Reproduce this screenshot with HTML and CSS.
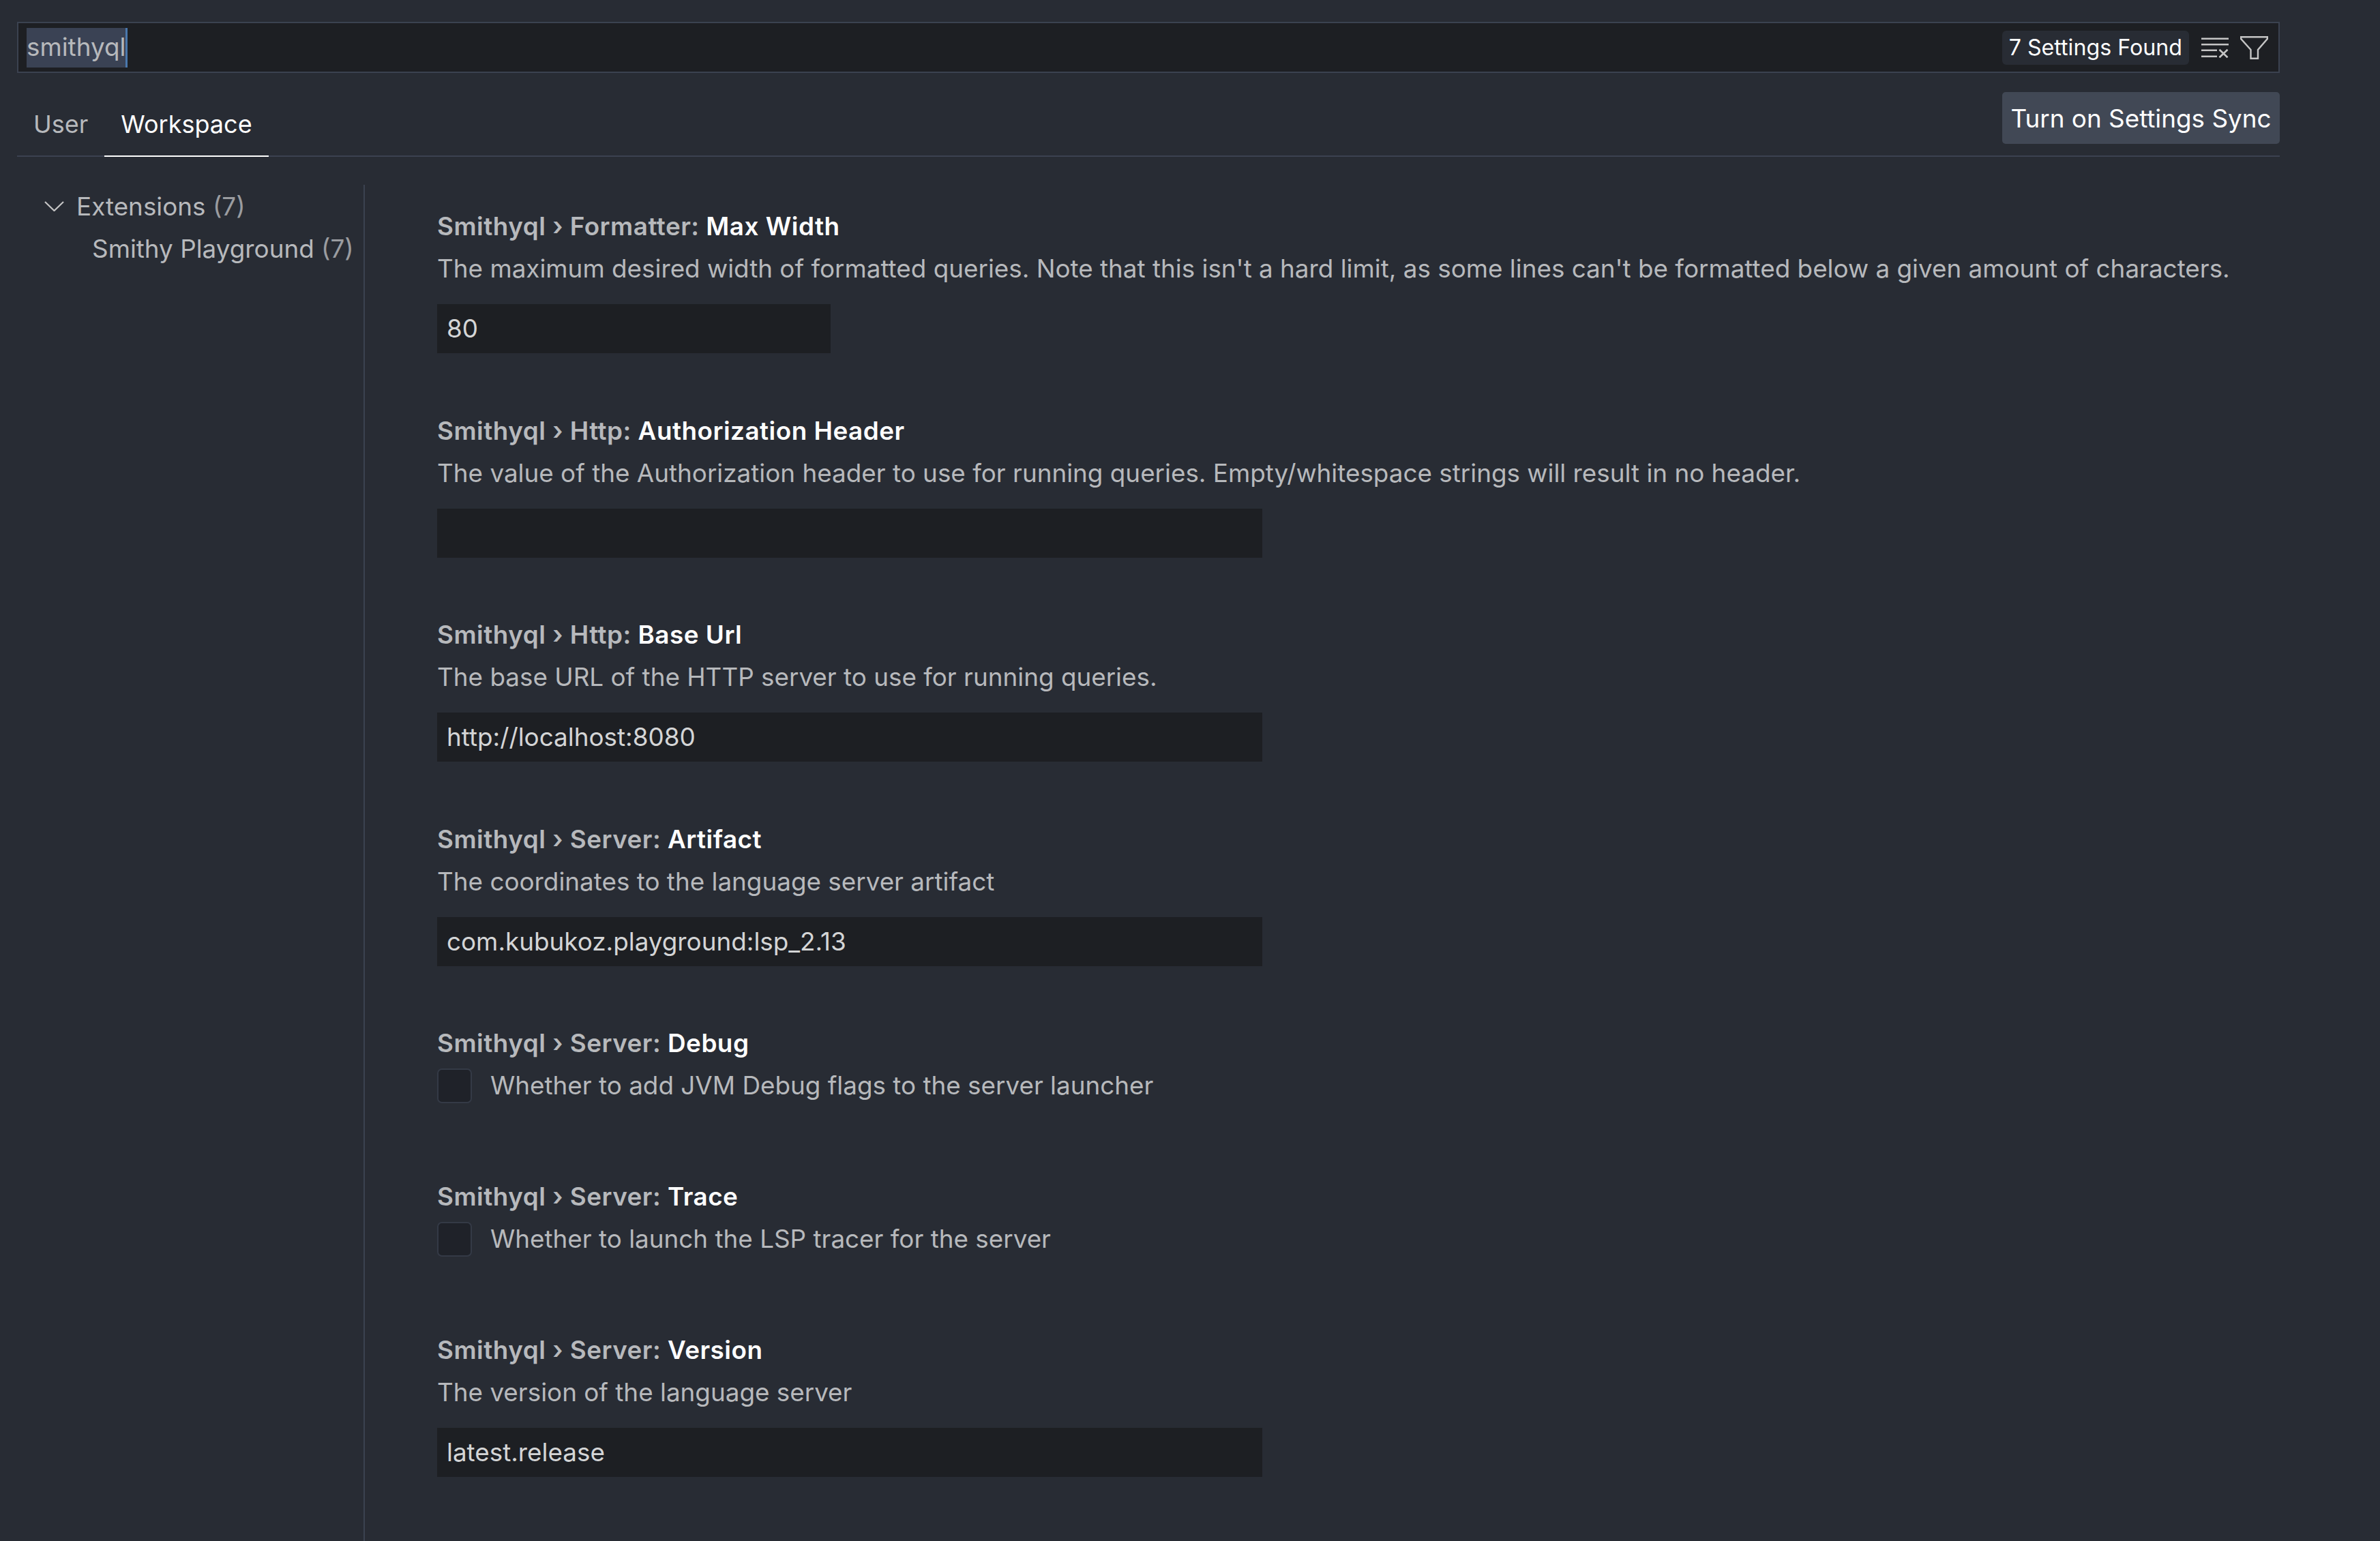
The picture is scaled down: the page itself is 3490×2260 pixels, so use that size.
FILE: index.html
```html
<!DOCTYPE html>
<html lang="en">
<head>
    <meta charset="UTF-8">
    <title>Settings</title>
    <link rel="stylesheet" href="styles.css">
</head>
<body>
    <div class="settings">
        <div class="search-box">
            <div class="search-field"><span class="search-text">smithyql</span></div>
            <span class="search-count">7 Settings Found</span>
            <svg class="search-icon clear-icon" viewBox="0 0 40 30" fill="none" stroke="#c5c5c5" stroke-width="2.6">
                <path d="M0 1.7H40M0 10.3H40M0 18.7H23M0 27.7H23M26.5 17.7L38.5 29.3M38.5 17.7L26.5 29.3"/>
            </svg>
            <svg class="search-icon filter-icon" viewBox="0 0 41 34" fill="none" stroke="#c5c5c5" stroke-width="2.4">
                <path d="M1.2 1.2H39.8V4L26 20V32.8H15.5V20L1.2 4Z"/>
            </svg>
        </div>

        <div class="tabs">
            <div class="tab">User</div>
            <div class="tab active">Workspace</div>
            <button class="sync-button">Turn on Settings Sync</button>
        </div>

        <div class="main">
            <div class="tree">
                <div class="tree-row">
                    <svg class="chevron" viewBox="0 0 29 15" fill="none" stroke="#c5c5c5" stroke-width="2.2">
                        <path d="M1 1L14.5 14L28 1"/>
                    </svg>
                    <span>Extensions <span class="tree-count">(7)</span></span>
                </div>
                <div class="tree-row child">Smithy Playground <span class="tree-count">(7)</span></div>
            </div>

            <div class="list">
                <div class="item">
                    <div class="item-title">Smithyql › Formatter: <b>Max Width</b></div>
                    <div class="item-desc">The maximum desired width of formatted queries. Note that this isn't a hard limit, as some lines can't be formatted below a given amount of characters.</div>
                    <div class="input short">80</div>
                </div>
                <div class="item">
                    <div class="item-title">Smithyql › Http: <b>Authorization Header</b></div>
                    <div class="item-desc">The value of the Authorization header to use for running queries. Empty/whitespace strings will result in no header.</div>
                    <div class="input"></div>
                </div>
                <div class="item">
                    <div class="item-title">Smithyql › Http: <b>Base Url</b></div>
                    <div class="item-desc">The base URL of the HTTP server to use for running queries.</div>
                    <div class="input">http://localhost:8080</div>
                </div>
                <div class="item">
                    <div class="item-title">Smithyql › Server: <b>Artifact</b></div>
                    <div class="item-desc">The coordinates to the language server artifact</div>
                    <div class="input">com.kubukoz.playground:lsp_2.13</div>
                </div>
                <div class="item check-item">
                    <div class="item-title">Smithyql › Server: <b>Debug</b></div>
                    <div class="check-row">
                        <span class="checkbox"></span>
                        <span class="item-desc">Whether to add JVM Debug flags to the server launcher</span>
                    </div>
                </div>
                <div class="item check-item">
                    <div class="item-title">Smithyql › Server: <b>Trace</b></div>
                    <div class="check-row">
                        <span class="checkbox"></span>
                        <span class="item-desc">Whether to launch the LSP tracer for the server</span>
                    </div>
                </div>
                <div class="item">
                    <div class="item-title">Smithyql › Server: <b>Version</b></div>
                    <div class="item-desc">The version of the language server</div>
                    <div class="input">latest.release</div>
                </div>
            </div>
        </div>
    </div>
</body>
</html>
```

FILE: styles.css
```css
html, body {
    margin: 0;
    height: 100%;
    background: #282c34;
}
body {
    font-family: Inter, "Noto Sans", sans-serif;
    font-size: 36.85px;
    color: #b7b9bc;
    overflow: hidden;
}
.settings {
    width: 3318px;
    margin-left: 25px;
    padding-top: 32px;
}
.search-box {
    display: flex;
    align-items: center;
    height: 75px;
    box-sizing: border-box;
    padding: 0 15px 0 12px;
    background: #1d1f23;
    border: 2px solid #3b4250;
}
.search-field {
    flex: 1;
}
.search-text {
    display: inline-block;
    height: 58px;
    line-height: 56px;
    background: #3a4254;
    border-right: 3px solid #4a78ad;
}
.search-count {
    height: 50px;
    line-height: 50px;
    padding: 0 10px;
    background: #282c34;
    border-radius: 6px;
    color: #fff;
    font-size: 32.2px;
}
.search-icon {
    display: block;
}
.clear-icon {
    width: 40px;
    height: 30px;
    margin-left: 18px;
}
.filter-icon {
    width: 41px;
    height: 34px;
    margin-left: 17px;
}
.tabs {
    display: flex;
    align-items: flex-end;
    height: 123px;
    box-sizing: border-box;
    border-bottom: 2px solid #3b4250;
}
.tab {
    padding: 0 24px;
    height: 71px;
    line-height: 46px;
    box-sizing: border-box;
    margin-bottom: -2px;
    font-size: 36px;
}
.tab.active {
    color: #fff;
    border-bottom: 2px solid #fff;
}
.sync-button {
    margin: 0 0 17px auto;
    width: 407px;
    height: 76px;
    padding: 0;
    border: none;
    border-radius: 5px;
    background: #414855;
    color: #fff;
    font-family: inherit;
    font-size: 36.85px;
}
.main {
    display: flex;
    margin-top: 41px;
}
.tree {
    width: 508px;
    border-right: 2px solid #3b4250;
    height: 1991px;
}
.tree-row {
    display: flex;
    align-items: center;
    gap: 18px;
    height: 63px;
    padding-left: 40px;
    white-space: pre;
}
.tree-row.child {
    display: block;
    height: 62px;
    line-height: 62px;
    padding-left: 110px;
}
.tree-count {
    opacity: 0.8;
}
.chevron {
    width: 29px;
    height: 15px;
}
.list {
    padding: 2px 0 0 106px;
}
.item {
    height: 299.5px;
}
.check-item {
    height: 225px;
}
.item-title {
    padding-top: 28px;
    height: 62px;
    line-height: 62px;
    font-weight: 600;
    letter-spacing: 0.5px;
}
.item-title b {
    color: #fff;
    font-weight: 600;
}
.item-desc {
    line-height: 62px;
    white-space: nowrap;
}
.input {
    margin-top: 21px;
    width: 1210px;
    height: 72px;
    line-height: 72px;
    padding-left: 14px;
    box-sizing: border-box;
    background: #1d1f23;
    color: #d4d5d6;
}
.input.short {
    width: 577px;
}
.check-row {
    display: flex;
    align-items: center;
    gap: 27px;
    height: 62px;
}
.checkbox {
    width: 51px;
    height: 51px;
    box-sizing: border-box;
    background: #1f2229;
    border: 2px solid #343a46;
    border-radius: 7px;
}
```
